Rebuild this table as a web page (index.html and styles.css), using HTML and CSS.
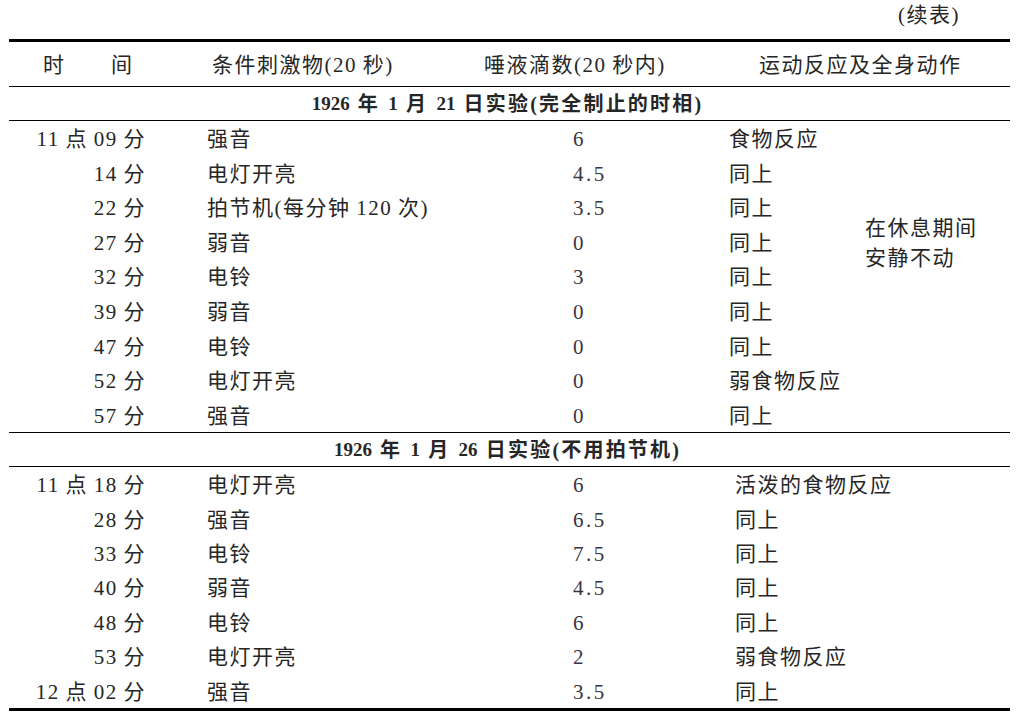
FILE: index.html
```html
<!DOCTYPE html>
<html lang="zh-CN">
<head>
<meta charset="utf-8">
<title>续表</title>
<link rel="stylesheet" href="styles.css">
</head>
<body>
<div class="page">
  <div class="note">(续表)</div>
  <div class="table">
    <div class="head">
      <span>时</span><span>间</span><span>条件刺激物(20 秒)</span><span>唾液滴数(20 秒内)</span><span>运动反应及全身动作</span>
    </div>
    <div class="title"><span class="d">1926</span> 年 <span class="d">1</span> 月 <span class="d">21</span> 日实验(完全制止的时相)</div>
    <div class="grid g1">
      <div class="c1">11 点 09 分</div><div class="c2">强音</div><div class="c3">6</div><div class="c4">食物反应</div>
      <div class="c1">14 分</div><div class="c2">电灯开亮</div><div class="c3">4.5</div><div class="c4">同上</div>
      <div class="c1">22 分</div><div class="c2">拍节机(每分钟 120 次)</div><div class="c3">3.5</div><div class="c4">同上</div>
      <div class="c1">27 分</div><div class="c2">弱音</div><div class="c3">0</div><div class="c4">同上</div>
      <div class="c1">32 分</div><div class="c2">电铃</div><div class="c3">3</div><div class="c4">同上</div>
      <div class="c1">39 分</div><div class="c2">弱音</div><div class="c3">0</div><div class="c4">同上</div>
      <div class="c1">47 分</div><div class="c2">电铃</div><div class="c3">0</div><div class="c4">同上</div>
      <div class="c1">52 分</div><div class="c2">电灯开亮</div><div class="c3">0</div><div class="c4">弱食物反应</div>
      <div class="c1">57 分</div><div class="c2">强音</div><div class="c3">0</div><div class="c4">同上</div>
      <div class="side">在休息期间<br>安静不动</div>
    </div>
    <div class="title"><span class="d">1926</span> 年 <span class="d">1</span> 月 <span class="d">26</span> 日实验(不用拍节机)</div>
    <div class="grid g2">
      <div class="c1">11 点 18 分</div><div class="c2">电灯开亮</div><div class="c3">6</div><div class="c4">活泼的食物反应</div>
      <div class="c1">28 分</div><div class="c2">强音</div><div class="c3">6.5</div><div class="c4">同上</div>
      <div class="c1">33 分</div><div class="c2">电铃</div><div class="c3">7.5</div><div class="c4">同上</div>
      <div class="c1">40 分</div><div class="c2">弱音</div><div class="c3">4.5</div><div class="c4">同上</div>
      <div class="c1">48 分</div><div class="c2">电铃</div><div class="c3">6</div><div class="c4">同上</div>
      <div class="c1">53 分</div><div class="c2">电灯开亮</div><div class="c3">2</div><div class="c4">弱食物反应</div>
      <div class="c1">12 点 02 分</div><div class="c2">强音</div><div class="c3">3.5</div><div class="c4">同上</div>
    </div>
  </div>
</div>
</body>
</html>
```

FILE: styles.css
```css
html, body {
  margin: 0;
  padding: 0;
  background: #ffffff;
}

body {
  color: #262626;
  font-family: "Liberation Serif", "Noto Sans CJK SC", serif;
  font-size: 21px;
  letter-spacing: 1.5px;
  word-spacing: -1px;
}

.page {
  width: 1001px;
  margin-left: 9px;
}

.note {
  height: 39px;
  line-height: 30px;
  text-align: right;
  padding-right: 50px;
  box-sizing: border-box;
}

.table {
  border-top: 3px solid #000;
  border-bottom: 3px solid #000;
}

.head {
  height: 45px;
  box-sizing: border-box;
  border-bottom: 1px solid #000;
  display: grid;
  grid-template-columns: 68px 101px 272px 275px 1fr;
  padding-left: 34px;
  padding-top: 1px;
  align-items: center;
  line-height: 24px;
  white-space: nowrap;
}

.title {
  height: 34px;
  box-sizing: border-box;
  border-bottom: 1px solid #000;
  display: flex;
  align-items: center;
  justify-content: center;
  padding-top: 1px;
  padding-right: 4px;
  font-family: "Liberation Serif", "Noto Sans CJK SC", sans-serif;
  font-weight: bold;
  font-size: 20px;
  letter-spacing: 2.2px;
  word-spacing: 1px;
  line-height: 24px;
  white-space: pre;
}

.title .d {
  font-size: 19px;
  letter-spacing: 0;
}

.grid {
  display: grid;
  align-items: center;
  line-height: 24px;
  white-space: nowrap;
  border-bottom: 1px solid #000;
}

.grid > div {
  padding-top: 2px;
}

.grid:last-child {
  border-bottom: none;
}

.g1 {
  grid-template-columns: 198px 366px 156px 136px 1fr;
  grid-auto-rows: 34.56px;
}

.g2 {
  grid-template-columns: 198px 366px 162px 1fr;
  grid-auto-rows: 34.45px;
}

.c1 {
  grid-column: 1;
  text-align: right;
  padding-right: 61px;
}

.c2 {
  grid-column: 2;
}

.c3 {
  grid-column: 3;
  color: #3a3442;
  letter-spacing: 2.5px;
}

.c4 {
  grid-column: 4;
}

.side {
  grid-column: 5;
  grid-row: 3 / span 3;
  align-self: center;
  line-height: 30px;
}
```
